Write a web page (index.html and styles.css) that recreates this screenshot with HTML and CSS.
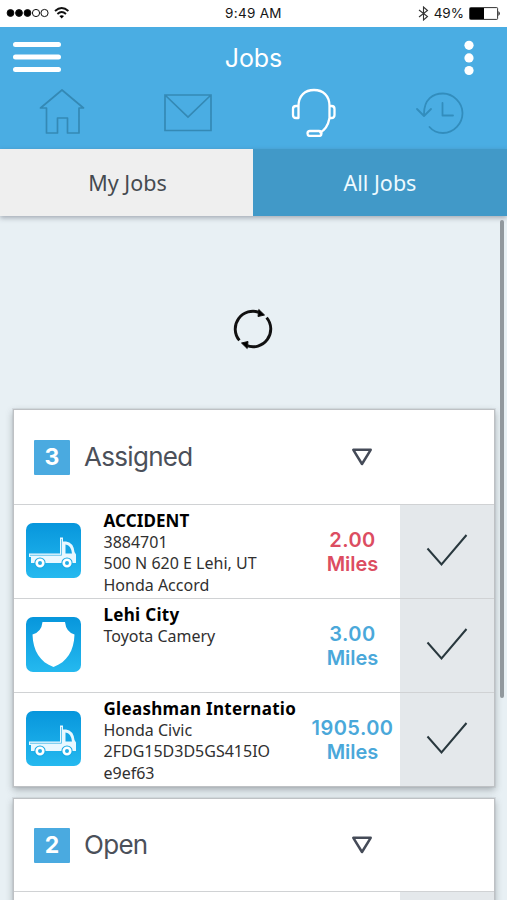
FILE: index.html
```html
<!DOCTYPE html>
<html lang="en">
<head>
<meta charset="utf-8">
<title>Jobs</title>
<link rel="stylesheet" href="styles.css">
</head>
<body>
<svg class="defs" width="0" height="0" aria-hidden="true">
  <defs>
    <linearGradient id="tile" x1="0" y1="0" x2="0" y2="1"><stop offset="0" stop-color="#0796dc"/><stop offset="1" stop-color="#25b9ef"/></linearGradient>
    <symbol id="truck" viewBox="0 0 55 55">
      <rect width="55" height="55" rx="7" fill="url(#tile)"/>
      <path d="M3 30.500H34V14.500h3v4h3q7.500 1 8.500 10.500l1.500 2.500V40H5V34H3z" fill="#e9f8ff"/>
      <path d="M39.500 21.500q5.500.5 6.500 9h-6.500z" fill="#15a5e4"/>
      <path d="M4 32.300H35.500V16" fill="none" stroke="#45b9ea" stroke-width=".8"/>
      <circle cx="14" cy="40" r="5.600" fill="#16a9e5"/><circle cx="41" cy="40" r="5.600" fill="#16a9e5"/>
      <circle cx="14" cy="40" r="3.300" fill="#22aee8" stroke="#fff" stroke-width="2.600"/><circle cx="41" cy="40" r="3.300" fill="#22aee8" stroke="#fff" stroke-width="2.600"/>
    </symbol>
    <symbol id="shield" viewBox="0 0 55 55">
      <rect width="55" height="55" rx="7" fill="url(#tile)"/>
      <path d="M16.500 5H39Q40 15 48.500 17.500C48 34 41 45 27.500 50C14 45 7 34 6.500 17.500Q15.500 15 16.500 5z" fill="#fff"/>
    </symbol>
    <symbol id="check" viewBox="0 0 42 34"><path d="M1.500 15.500L15.500 31.500L40.500 2" fill="none" stroke="#29383e" stroke-width="2"/></symbol>
    <symbol id="down" viewBox="0 0 22 18"><path d="M2.300 1.800H19.700L11 16z" fill="none" stroke="#454b58" stroke-width="2.500" stroke-linejoin="round"/></symbol>
  </defs>
</svg>
<div class="app">
  <div class="status">
    <div class="status-left">
      <svg width="64" height="14" viewBox="0 0 64 14"><g stroke="#111" stroke-width="1"><circle cx="4.500" cy="7" r="3.400"/><circle cx="13" cy="7" r="3.400"/><circle cx="21.500" cy="7" r="3.400"/><circle cx="30" cy="7" r="3.600" fill="none"/><circle cx="38.500" cy="7" r="3.600" fill="none"/></g><g fill="none" stroke="#111" stroke-width="1.900"><path d="M49 5q6.700-6 13.400 0M51.400 8q4.300-3.800 8.600 0"/></g><path d="M53.400 10q2.300-1.700 4.600 0l-2.300 2.400z"/></svg>
    </div>
    <div class="time">9:49 AM</div>
    <div class="status-right">
      <svg width="11" height="15" viewBox="0 0 11 15"><path d="M1 4L9.500 10.500L5.500 14V1L9.500 4.500L1 11" fill="none" stroke="#333" stroke-width="1.100"/></svg>
      <span>49%</span>
      <svg width="32" height="13" viewBox="0 0 32 13"><rect x=".6" y=".6" width="28" height="11.800" rx=".8" fill="none" stroke="#333"/><rect x="1" y="1" width="14" height="11"/><path d="M29.500 4q2.500 2.500 0 5z"/></svg>
    </div>
  </div>
  <header class="header">
    <div class="titlebar">
      <svg width="48" height="32" viewBox="0 0 48 32" stroke="#fff" stroke-width="5" stroke-linecap="round"><path d="M2.500 3.500H45.500M2.500 16H45.500M2.500 28.500H45.500"/></svg>
      <h1>Jobs</h1>
      <svg class="more" width="10" height="36" viewBox="0 0 10 36" fill="#fff"><circle cx="5" cy="5.300" r="4.600"/><circle cx="5" cy="17.900" r="4.600"/><circle cx="5" cy="30.500" r="4.600"/></svg>
    </div>
    <nav class="nav">
      <svg viewBox="0 0 50 50" fill="none" stroke="#3489b5" stroke-width="1.700" stroke-linejoin="round"><path d="M3.500 21L25 3L46.500 21H42V46H30.500V31H20.500V46H9.500V21z"/></svg>
      <svg viewBox="0 0 50 50" fill="none" stroke="#3489b5" stroke-width="1.700"><path d="M2 8H48V43.500H2zL25 30L48 8"/></svg>
      <svg viewBox="0 0 50 50" fill="none" stroke="#fff" stroke-width="2.300" stroke-linejoin="round"><path d="M9.500 19C9.500 8.500 16 3 25 3S40.500 8.500 40.500 19V31Q38.500 42 30.500 46"/><path d="M9.500 19V31H7Q4 31 4 28V22Q4 19 7 19H9.500M40.500 19H42.500Q45.500 19 45.500 22V28Q45.500 31 42.500 31H40.500"/><rect x="18.500" y="44" width="14" height="5" rx="2.500"/></svg>
      <svg viewBox="0 0 50 50" fill="none" stroke="#328dbd" stroke-width="1.800" stroke-linecap="round" stroke-linejoin="round"><path d="M9 27C9 12 18 6.500 28 6.500S47.500 15.500 47.500 26S39 46 28 46Q19.500 46 14.500 40M2 22L9 29L16 22M27.500 16V28.500H38"/></svg>
    </nav>
  </header>
  <div class="tabs"><div class="tab">My Jobs</div><div class="tab active">All Jobs</div></div>
  <main class="content">
    <div class="refresh"><svg width="42" height="42" viewBox="0 0 42 42"><path d="M7.400 32.400A17.700 17.700 0 0 1 27.600 4.600M34.600 9.600A17.700 17.700 0 0 1 14.400 37.400" fill="none" stroke="#111" stroke-width="2.900"/><path d="M26.800 1.500L32.500 7L26 8.500zM15.200 40.500L9.500 35L16 33.500z" stroke="#111" stroke-linejoin="round"/></svg></div>
    <section class="card">
      <div class="card-head"><span class="count">3</span><h2>Assigned</h2><svg class="arrow"><use href="#down"/></svg></div>
      <div class="row">
        <svg class="icon"><use href="#truck"/></svg>
        <div class="info"><strong class="tight">ACCIDENT</strong><span>3884701</span><span>500 N 620 E Lehi, UT</span><span>Honda Accord</span></div>
        <div class="miles red"><span class="distance">2.00</span><span>Miles</span></div>
        <div class="done"><svg><use href="#check"/></svg></div>
      </div>
      <div class="row">
        <svg class="icon"><use href="#shield"/></svg>
        <div class="info"><strong>Lehi City</strong><span>Toyota Camery</span></div>
        <div class="miles"><span class="distance">3.00</span><span>Miles</span></div>
        <div class="done"><svg><use href="#check"/></svg></div>
      </div>
      <div class="row">
        <svg class="icon"><use href="#truck"/></svg>
        <div class="info"><strong>Gleashman Internatio</strong><span>Honda Civic</span><span>2FDG15D3D5GS415IO</span><span>e9ef63</span></div>
        <div class="miles"><span class="distance">1905.00</span><span>Miles</span></div>
        <div class="done"><svg><use href="#check"/></svg></div>
      </div>
    </section>
    <section class="card">
      <div class="card-head compact"><span class="count">2</span><h2>Open</h2><svg class="arrow"><use href="#down"/></svg></div>
      <div class="row"><div class="icon"></div><div class="info"></div><div class="miles"></div><div class="done"></div></div>
    </section>
    <div class="scrollbar"></div>
  </main>
</div>
</body>
</html>
```
FILE: styles.css
```css
* { box-sizing: border-box; }
body { margin: 0; font-family: "Noto Sans", sans-serif; background: #e8f0f4; }
.defs { position: absolute; }
.app { width: 507px; height: 900px; overflow: hidden; display: flex; flex-direction: column; }
svg { display: block; flex: none; }
h1, h2 { margin: 0; font-weight: 400; }

.status { height: 27px; flex: none; background: #fff; display: grid; grid-template-columns: 1fr auto 1fr; align-items: center; padding: 0 6px 1px 6px; font: 13.5px Inter, sans-serif; color: #151515; }
.time { letter-spacing: .3px; }
.status-right { display: flex; justify-content: flex-end; align-items: center; gap: 5px; }

.header { height: 122px; flex: none; background: #4aade3; }
.titlebar { height: 60px; display: grid; grid-template-columns: 1fr auto 1fr; align-items: center; padding: 0 33px 0 13px; }
.titlebar h1 { font: 25px/30px Inter, sans-serif; letter-spacing: -.1px; color: #fff; padding: 2px 0 0 20px; }
.more { justify-self: end; margin-top: 2px; }
.nav { display: flex; justify-content: space-between; padding: 0 42px 0 37px; }
.nav svg { width: 50px; height: 50px; }

.tabs { height: 67px; flex: none; display: flex; position: relative; box-shadow: 0 2px 5px rgba(60, 65, 85, .4); }
.tab { width: 253px; flex: none; display: flex; align-items: center; justify-content: center; background: #efefef; color: #454a50; font-size: 21.5px; padding: 0 0 1px 2px; }
.tab.active { width: 254px; padding-left: 0; background: #4199c8; color: #eefaff; }

.content { flex: 1; min-height: 0; position: relative; padding: 0 12px 0 13px; }
.refresh { height: 193px; display: flex; justify-content: center; padding: 92px 2px 0 0; }
.card { background: #fff; border: 1px solid #bec1c4; outline: 1px solid rgba(160, 165, 170, .2); box-shadow: 0 3px 7px rgba(60, 65, 70, .38); margin-bottom: 11px; }
.card-head { height: 94px; display: flex; align-items: center; padding-left: 20px; }
.card-head.compact { height: 92.500px; padding-top: 1px; }
.count { width: 36px; height: 35px; background: #4aaae0; border-radius: 1px; color: #fff; font: 700 23px/35px Inter, sans-serif; text-align: center; }
.card-head h2 { font: 26px/32px Inter, sans-serif; letter-spacing: -.7px; color: #4b505a; width: 281px; flex: none; padding-left: 14px; }
.arrow { width: 22px; height: 18px; }

.row { height: 94px; display: flex; border-top: 1px solid #d0d2d4; }
.row:nth-child(4) { height: 93.500px; }
.icon { width: 55px; height: 55px; margin: 18px 22px 0 12px; }
.info { width: 199px; padding: 5px 0 0 .5px; display: flex; flex-direction: column; font-size: 16px; line-height: 21.500px; color: #303030; white-space: nowrap; }
.info strong { color: #000; font-size: 17px; letter-spacing: .3px; }
.info .tight { letter-spacing: .1px; }
.miles { width: 98px; padding: 22.500px 0 0 3px; display: flex; flex-direction: column; align-items: center; font: 600 20px/24px Inter, sans-serif; color: #4aa8da; }
.miles.red { color: #dc4d61; }
.distance { letter-spacing: .45px; }
.done { flex: 1; background: #e4e8eb; padding: 28px 0 0 26px; }
.done svg { width: 42px; height: 34px; }
.scrollbar { position: absolute; top: 4px; right: 3px; width: 4px; height: 478px; border-radius: 2px; background: #91989d; }
```
